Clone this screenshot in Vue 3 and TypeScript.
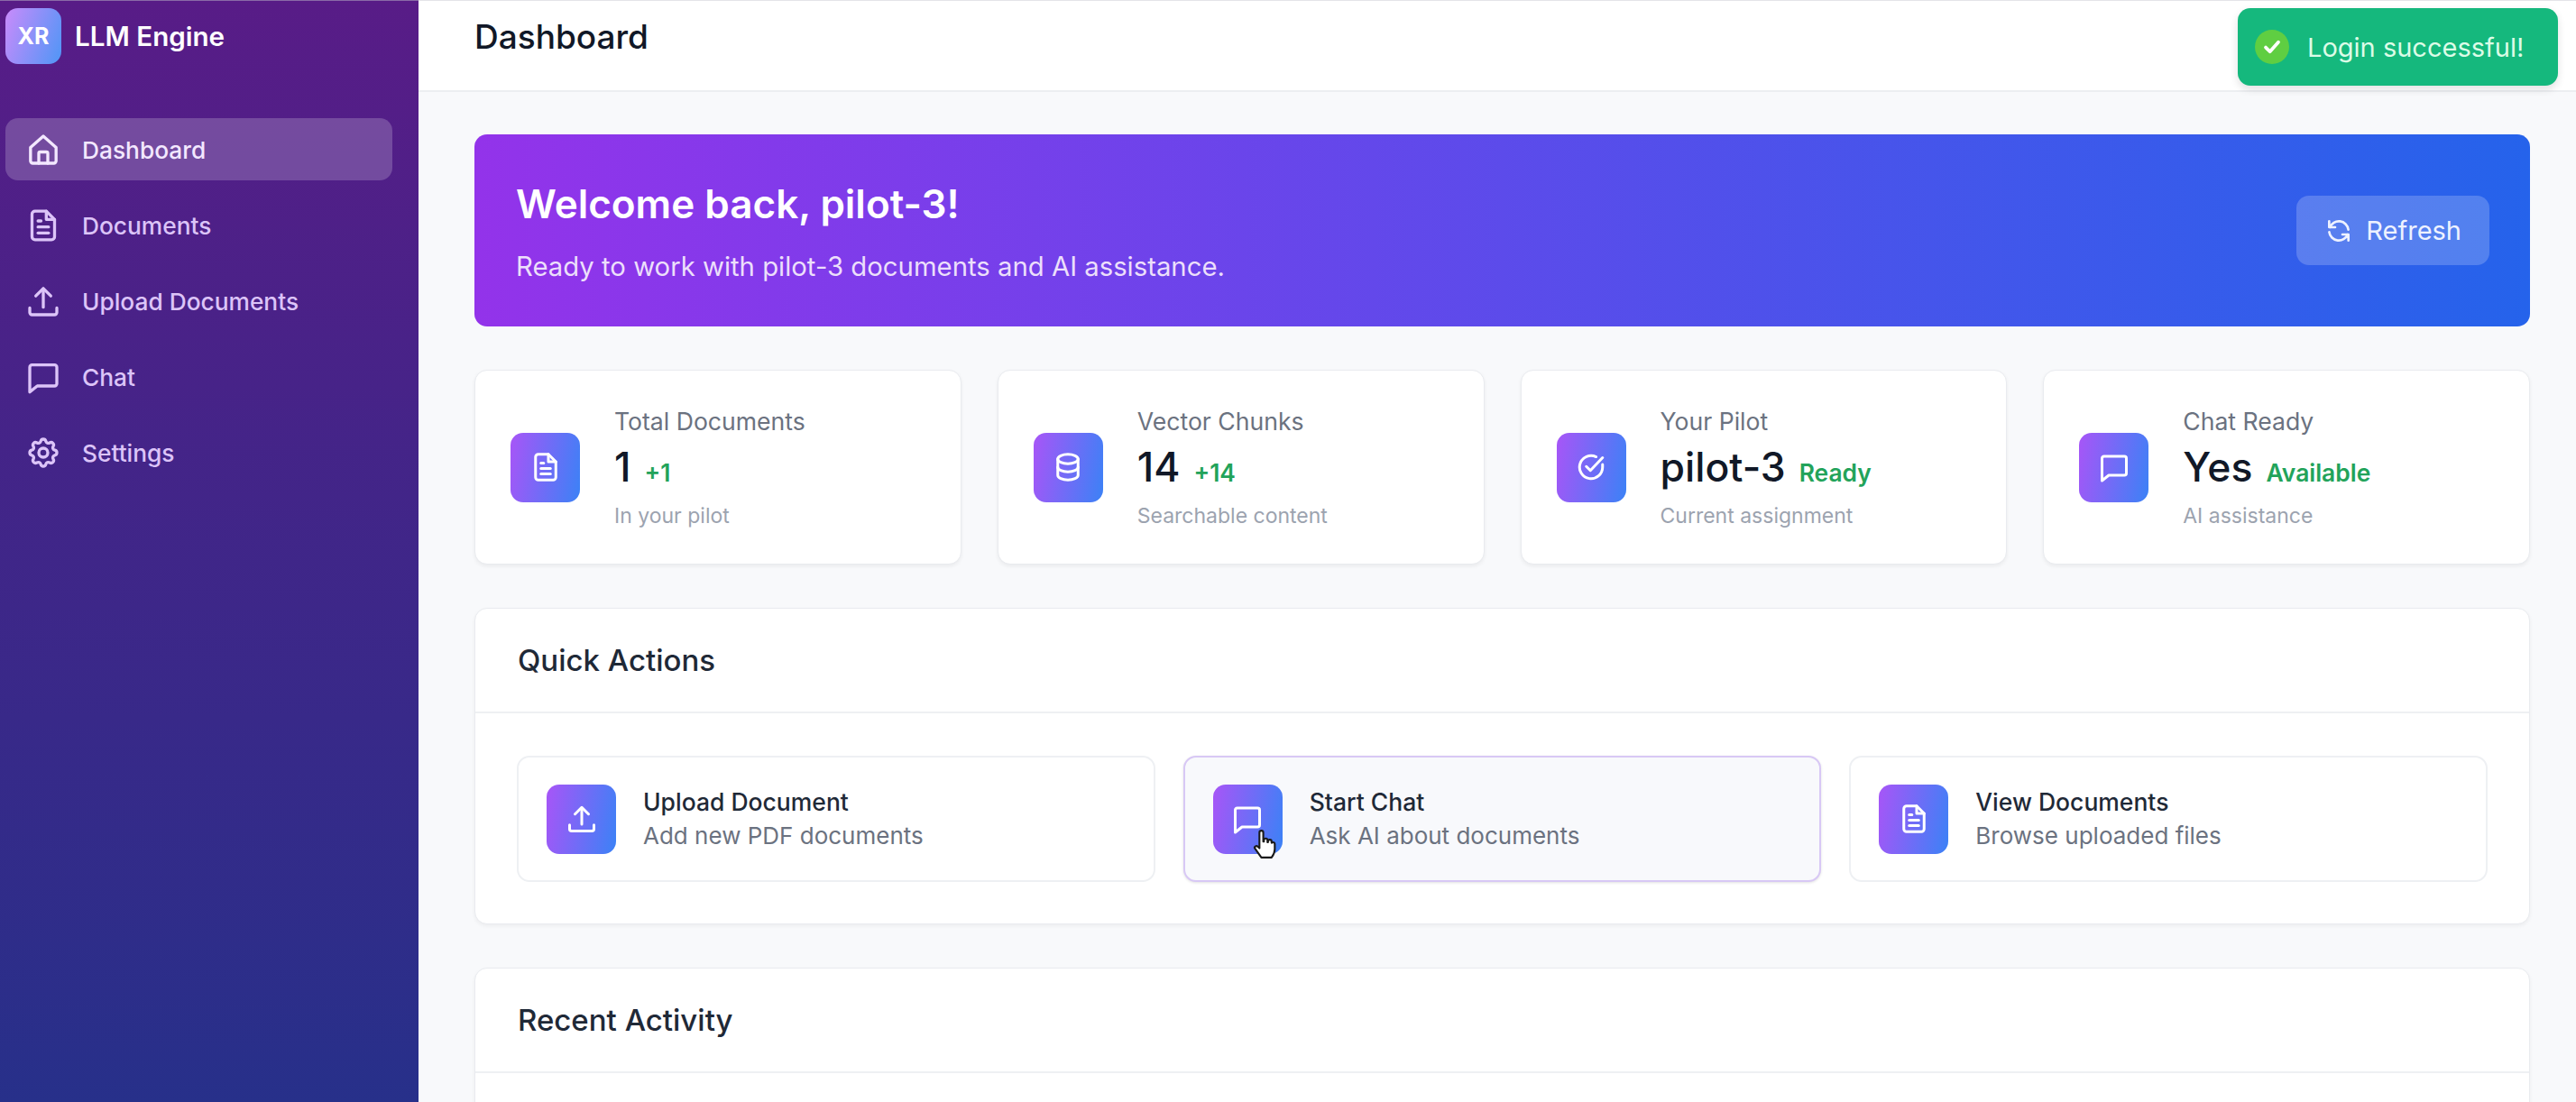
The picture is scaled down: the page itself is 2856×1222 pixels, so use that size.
<template>
  <div class="shell">
    <aside class="sidebar">
      <div class="brand">
        <div class="logo">XR</div>
        <span class="brand-name">LLM Engine</span>
      </div>
      <nav class="nav">
        <a v-for="item in navItems" :key="item.label" class="nav-item" :class="{ active: item.active }">
          <svg class="icon" viewBox="0 0 24 24"><path v-for="d in icons[item.icon]" :key="d" :d="d" /></svg>
          <span>{{ item.label }}</span>
        </a>
      </nav>
    </aside>

    <div class="page">
      <header class="topbar">
        <h1>Dashboard</h1>
      </header>

      <main class="content">
        <section class="banner">
          <div class="banner-text">
            <h2>Welcome back, pilot-3!</h2>
            <p>Ready to work with pilot-3 documents and AI assistance.</p>
          </div>
          <button class="refresh" type="button">
            <svg class="icon refresh-icon" viewBox="0 0 24 24"><path v-for="d in icons.refresh" :key="d" :d="d" /></svg>
            Refresh
          </button>
        </section>

        <section class="stats">
          <div v-for="stat in stats" :key="stat.label" class="stat-card">
            <div class="icon-box">
              <svg class="icon" viewBox="0 0 24 24"><path v-for="d in icons[stat.icon]" :key="d" :d="d" /></svg>
            </div>
            <div class="stat-text">
              <div class="stat-label">{{ stat.label }}</div>
              <div class="stat-value">
                <span class="value">{{ stat.value }}</span>
                <span class="delta">{{ stat.delta }}</span>
              </div>
              <div class="stat-sub">{{ stat.sub }}</div>
            </div>
          </div>
        </section>

        <section class="card">
          <div class="card-head"><h3>Quick Actions</h3></div>
          <div class="actions">
            <div v-for="action in actions" :key="action.title" class="action" :class="{ hover: action.hover }">
              <div class="icon-box">
                <svg class="icon" viewBox="0 0 24 24"><path v-for="d in icons[action.icon]" :key="d" :d="d" /></svg>
                <svg v-if="action.hover" class="cursor" viewBox="0 0 24 24">
                  <path d="M8 3a1.5 1.5 0 0 1 3 0v7h.5V9a1.4 1.4 0 0 1 2.8 0v1.5h.4V10a1.4 1.4 0 0 1 2.8 0v1h.3a1.3 1.3 0 0 1 2.2 1v4c0 3-1.5 5-2.5 6.5H9.5L4.5 15.5c-.9-1.3 1-2.7 2.2-1.6L8 15.2z" />
                </svg>
              </div>
              <div class="action-text">
                <div class="action-title">{{ action.title }}</div>
                <div class="action-sub">{{ action.sub }}</div>
              </div>
            </div>
          </div>
        </section>

        <section class="card recent">
          <div class="card-head"><h3>Recent Activity</h3></div>
        </section>
      </main>
    </div>

    <div class="toast">
      <span class="toast-check">
        <svg viewBox="0 0 24 24"><path d="M6 12.5l4 4 8-9" /></svg>
      </span>
      Login successful!
    </div>
  </div>
</template>

<script setup lang="ts">
interface NavItem {
  label: string
  icon: string
  active?: boolean
}

interface Stat {
  label: string
  value: string
  delta: string
  sub: string
  icon: string
}

interface Action {
  title: string
  sub: string
  icon: string
  hover?: boolean
}

const icons: Record<string, string[]> = {
  home: [
    'M3.5 10.5 12 3l8.5 7.5V19.5a1.5 1.5 0 0 1-1.5 1.5H5a1.5 1.5 0 0 1-1.5-1.5z',
    'M9 21v-6.5a1 1 0 0 1 1-1h4a1 1 0 0 1 1 1V21',
  ],
  document: [
    'M14 2.5H6.5a2 2 0 0 0-2 2v15a2 2 0 0 0 2 2h11a2 2 0 0 0 2-2V8z',
    'M14 2.5V8h5.5',
    'M8.5 13h7',
    'M8.5 17h7',
    'M8.5 9h2',
  ],
  upload: [
    'M12 16V4',
    'M7 8.5 12 3.5l5 5',
    'M3 16.5v3A1.5 1.5 0 0 0 4.5 21h15a1.5 1.5 0 0 0 1.5-1.5v-3',
  ],
  chat: ['M3 5.5A1.5 1.5 0 0 1 4.5 4h15A1.5 1.5 0 0 1 21 5.5v11a1.5 1.5 0 0 1-1.5 1.5H8l-5 4z'],
  settings: [
    'M10.325 4.317c.426-1.756 2.924-1.756 3.35 0a1.724 1.724 0 002.573 1.066c1.543-.94 3.31.826 2.37 2.37a1.724 1.724 0 001.065 2.572c1.756.426 1.756 2.924 0 3.35a1.724 1.724 0 00-1.066 2.573c.94 1.543-.826 3.31-2.37 2.37a1.724 1.724 0 00-2.572 1.065c-.426 1.756-2.924 1.756-3.35 0a1.724 1.724 0 00-2.573-1.066c-1.543.94-3.31-.826-2.37-2.37a1.724 1.724 0 00-1.065-2.572c-1.756-.426-1.756-2.924 0-3.35a1.724 1.724 0 001.066-2.573c-.94-1.543.826-3.31 2.37-2.37.996.608 2.296.07 2.572-1.065z',
    'M15 12a3 3 0 11-6 0 3 3 0 016 0z',
  ],
  database: [
    'M4.5 6c0-1.9 3.4-3.5 7.5-3.5s7.5 1.6 7.5 3.5-3.4 3.5-7.5 3.5S4.5 7.9 4.5 6z',
    'M4.5 6v12c0 1.9 3.4 3.5 7.5 3.5s7.5-1.6 7.5-3.5V6',
    'M4.5 12c0 1.9 3.4 3.5 7.5 3.5s7.5-1.6 7.5-3.5',
  ],
  check: [
    'M20.5 10v2a8.5 8.5 0 1 1-4.8-7.65',
    'M8.5 11.5l3 3 9-9.5',
  ],
  refresh: [
    'M4 4v5h.582m15.356 2A8.001 8.001 0 004.582 9m0 0H9m11 11v-5h-.581m0 0a8.003 8.003 0 01-15.357-2m15.357 2H15',
  ],
}

const navItems: NavItem[] = [
  { label: 'Dashboard', icon: 'home', active: true },
  { label: 'Documents', icon: 'document' },
  { label: 'Upload Documents', icon: 'upload' },
  { label: 'Chat', icon: 'chat' },
  { label: 'Settings', icon: 'settings' },
]

const stats: Stat[] = [
  { label: 'Total Documents', value: '1', delta: '+1', sub: 'In your pilot', icon: 'document' },
  { label: 'Vector Chunks', value: '14', delta: '+14', sub: 'Searchable content', icon: 'database' },
  { label: 'Your Pilot', value: 'pilot-3', delta: 'Ready', sub: 'Current assignment', icon: 'check' },
  { label: 'Chat Ready', value: 'Yes', delta: 'Available', sub: 'AI assistance', icon: 'chat' },
]

const actions: Action[] = [
  { title: 'Upload Document', sub: 'Add new PDF documents', icon: 'upload' },
  { title: 'Start Chat', sub: 'Ask AI about documents', icon: 'chat', hover: true },
  { title: 'View Documents', sub: 'Browse uploaded files', icon: 'document' },
]
</script>

<style scoped>
.shell {
  display: flex;
  height: 1222px;
  font-family: Inter, "Liberation Sans", sans-serif;
  color: #111827;
  background: #f8f9fb;
  overflow: hidden;
}

.sidebar {
  width: 464px;
  flex-shrink: 0;
  box-sizing: border-box;
  padding: 8px 29px 0 6px;
  border-top: 1px solid #8a6aa8;
  background: linear-gradient(180deg, #581c87 0%, #27308a 100%);
}

.brand {
  display: flex;
  align-items: center;
  gap: 15px;
  height: 62px;
}

.logo {
  width: 62px;
  height: 62px;
  display: flex;
  align-items: center;
  justify-content: center;
  border-radius: 14px;
  background: linear-gradient(110deg, #c98bfb, #4f96f6);
  color: #fff;
  font-size: 25px;
  font-weight: 700;
}

.brand-name {
  font-size: 29.6px;
  font-weight: 600;
  color: #fff;
  margin-top: -1px;
}

.nav {
  display: flex;
  flex-direction: column;
  gap: 15px;
  margin-top: 60px;
}

.nav-item {
  display: flex;
  align-items: center;
  gap: 23px;
  height: 69px;
  padding-left: 22px;
  border-radius: 14px;
  font-size: 26.3px;
  font-weight: 500;
  color: #dcc4f8;
}

.nav-item span {
  padding-top: 1px;
}

.nav-item.active {
  background: rgba(255, 255, 255, 0.2);
  color: #f3e8ff;
}

.icon {
  width: 36px;
  height: 36px;
  flex-shrink: 0;
  fill: none;
  stroke: currentColor;
  stroke-width: 2;
  stroke-linecap: round;
  stroke-linejoin: round;
}

.nav-item .icon {
  width: 40px;
  height: 40px;
}

.page {
  flex: 1;
  min-width: 0;
  display: flex;
  flex-direction: column;
}

.topbar {
  height: 102px;
  flex-shrink: 0;
  box-sizing: border-box;
  padding: 19px 62px 0;
  background: #fff;
  border-top: 1px solid #e4e4e8;
  border-bottom: 2px solid #eceef1;
}

.topbar h1 {
  margin: 0;
  font-size: 37px;
  line-height: 42px;
  font-weight: 500;
}

.content {
  flex: 1;
  min-height: 0;
  display: flex;
  flex-direction: column;
  gap: 48px;
  padding: 47px 51px 0 62px;
}

.banner {
  display: flex;
  align-items: center;
  justify-content: space-between;
  height: 213px;
  flex-shrink: 0;
  box-sizing: border-box;
  padding: 0 45px 0 46px;
  border-radius: 14px;
  background: linear-gradient(90deg, #9333ea, #2563eb);
  color: #fff;
}

.banner-text {
  padding-top: 4px;
}

.banner h2 {
  margin: 0 0 24px;
  font-size: 44px;
  line-height: 52px;
  font-weight: 600;
}

.banner p {
  margin: 0;
  font-size: 29.3px;
  line-height: 40px;
  color: #ecdffb;
}

.refresh {
  display: flex;
  align-items: center;
  gap: 14px;
  height: 77px;
  padding: 0 31px;
  border: none;
  border-radius: 14px;
  background: rgba(255, 255, 255, 0.2);
  color: #eef2ff;
  font-family: inherit;
  font-size: 29px;
}

.refresh-icon {
  width: 32px;
  height: 32px;
}

.stats {
  display: grid;
  grid-template-columns: repeat(4, 1fr);
  gap: 40px;
  flex-shrink: 0;
}

.stat-card {
  display: flex;
  align-items: center;
  gap: 38px;
  height: 216px;
  box-sizing: border-box;
  padding-left: 39px;
  background: #fff;
  border: 1px solid #e9ebef;
  border-radius: 14px;
  box-shadow: 0 2px 4px rgba(0, 0, 0, 0.06);
}

.icon-box {
  position: relative;
  width: 77px;
  height: 77px;
  flex-shrink: 0;
  display: flex;
  align-items: center;
  justify-content: center;
  border-radius: 14px;
  background: linear-gradient(100deg, #a855f7, #3b82f6);
  color: #fff;
}

.stat-text {
  padding: 6px 0 5px;
}

.stat-label {
  font-size: 26.6px;
  line-height: 37px;
  color: #6b7280;
}

.stat-value {
  display: flex;
  align-items: baseline;
  gap: 15px;
  line-height: 64px;
}

.value {
  font-size: 44.5px;
  font-weight: 500;
  color: #111827;
}

.delta {
  font-size: 26.4px;
  font-weight: 600;
  color: #22a35a;
}

.stat-sub {
  font-size: 23px;
  line-height: 32px;
  color: #9ca3af;
}

.card {
  flex-shrink: 0;
  background: #fff;
  border: 1px solid #e9ebef;
  border-radius: 14px;
  box-shadow: 0 2px 4px rgba(0, 0, 0, 0.05);
}

.card-head {
  height: 116px;
  display: flex;
  align-items: center;
  box-sizing: border-box;
  padding-left: 47px;
  border-bottom: 2px solid #eef0f3;
}

.card-head h3 {
  margin: 0;
  font-size: 33px;
  font-weight: 500;
  color: #1f2937;
}

.recent {
  height: 300px;
}

.actions {
  display: grid;
  grid-template-columns: repeat(3, 1fr);
  gap: 31px;
  padding: 47px 46px 46px;
}

.action {
  display: flex;
  align-items: center;
  gap: 30px;
  height: 140px;
  box-sizing: border-box;
  padding-left: 31px;
  background: #fff;
  border: 2px solid #eef0f3;
  border-radius: 14px;
}

.action.hover {
  background: #f8f9fc;
  border-color: #d8c8f5;
  box-shadow: 0 1px 3px rgba(0, 0, 0, 0.12);
}

.action-title {
  font-size: 26.5px;
  line-height: 38px;
  font-weight: 500;
  color: #1f2937;
}

.action-sub {
  font-size: 26px;
  line-height: 38px;
  color: #6b7280;
}

.cursor {
  position: absolute;
  left: 40px;
  top: 48px;
  width: 34px;
  height: 36px;
  fill: #fff;
  stroke: #1a1a1a;
  stroke-width: 1.5;
  stroke-linejoin: round;
}

.toast {
  position: absolute;
  top: 9px;
  left: 2481px;
  width: 355px;
  height: 86px;
  box-sizing: border-box;
  display: flex;
  align-items: center;
  gap: 20px;
  padding-left: 19px;
  border-radius: 14px;
  background: #15b87d;
  color: #dcfce7;
  font-size: 29px;
  box-shadow: 0 4px 10px rgba(0, 0, 0, 0.12);
}

.toast-check {
  width: 38px;
  height: 38px;
  flex-shrink: 0;
  display: flex;
  align-items: center;
  justify-content: center;
  border-radius: 50%;
  background: #5fce42;
}

.toast-check svg {
  width: 28px;
  height: 28px;
  fill: none;
  stroke: #fff;
  stroke-width: 3.2;
  stroke-linecap: round;
  stroke-linejoin: round;
}
</style>

<style>
html,
body {
  margin: 0;
  overflow: hidden;
}
</style>
